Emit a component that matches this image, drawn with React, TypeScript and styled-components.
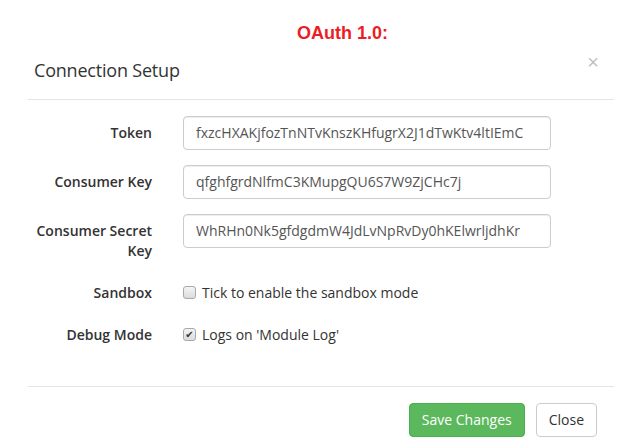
import React from 'react';
import styled, { createGlobalStyle } from 'styled-components';

const GlobalStyle = createGlobalStyle`
  html, body {
    margin: 0;
    padding: 0;
    background: #fff;
  }
  body {
    font-family: 'Open Sans', 'Liberation Sans', sans-serif;
    font-size: 14px;
    color: #333;
  }
  * {
    box-sizing: border-box;
  }
`;

const Page = styled.div`
  width: 623px;
  height: 444px;
  overflow: hidden;
`;

const Caption = styled.h2`
  margin: 0;
  padding: 23px 0 0 297px;
  font-family: 'Liberation Sans', Arial, sans-serif;
  font-size: 18px;
  line-height: 21px;
  font-weight: 700;
  color: #ed1c24;
`;

const Modal = styled.div`
  margin-left: 28px;
  width: 586px;
`;

const Header = styled.div`
  display: flex;
  justify-content: space-between;
  align-items: flex-start;
  padding: 14px 15px 15px 6px;
  border-bottom: 1px solid #e5e5e5;
`;

const Title = styled.h4`
  margin: 0;
  font-size: 18px;
  font-weight: 400;
  line-height: 1.42857;
  letter-spacing: -0.2px;
  color: #333;
`;

const CloseX = styled.button`
  margin-top: -6px;
  padding: 0;
  border: 0;
  background: transparent;
  font-family: 'Liberation Sans', Arial, sans-serif;
  font-size: 20px;
  font-weight: 400;
  line-height: 1;
  color: #000;
  opacity: 0.25;
  cursor: pointer;
`;

const Body = styled.div`
  padding: 16px 0 41px;
  display: grid;
  grid-template-columns: 124px 368px;
  column-gap: 31px;
  row-gap: 15px;
`;

const Label = styled.label`
  padding-top: 7px;
  text-align: right;
  font-weight: 600;
  line-height: 20px;
  color: #333;
`;

const Input = styled.input`
  display: block;
  width: 100%;
  height: 34px;
  padding: 6px 12px;
  font-family: inherit;
  font-size: 14px;
  line-height: 20px;
  color: #555;
  background: #fff;
  border: 1px solid #ccc;
  border-radius: 4px;
  box-shadow: inset 0 1px 1px rgba(0, 0, 0, 0.075);
  outline: none;
`;

const CheckLine = styled.label`
  display: flex;
  align-items: center;
  gap: 6px;
  padding-top: 7px;
  line-height: 20px;
  color: #333;
  cursor: pointer;
`;

const Box = styled.span<{ $checked?: boolean }>`
  display: inline-flex;
  align-items: center;
  justify-content: center;
  width: 13px;
  height: 13px;
  border: 1px solid #a9a9a9;
  border-radius: 3px;
  background: linear-gradient(#f4f4f4, #dcdcdc);
  font-family: 'DejaVu Sans', sans-serif;
  font-size: 10px;
  line-height: 1;
  color: #333;
`;

const Footer = styled.div`
  display: flex;
  justify-content: flex-end;
  gap: 11px;
  padding: 16px 17px 0 0;
  border-top: 1px solid #e5e5e5;
`;

const Button = styled.button<{ $primary?: boolean }>`
  height: 34px;
  padding: 6px 12px;
  font-family: inherit;
  font-size: 14px;
  line-height: 20px;
  border-radius: 4px;
  border: 1px solid ${p => (p.$primary ? '#4cae4c' : '#ccc')};
  background: ${p => (p.$primary ? '#5cb85c' : '#fff')};
  color: ${p => (p.$primary ? '#fff' : '#333')};
  cursor: pointer;
`;

const fields = [
  { label: 'Token', value: 'fxzcHXAKjfozTnNTvKnszKHfugrX2J1dTwKtv4ltIEmC' },
  { label: 'Consumer Key', value: 'qfghfgrdNlfmC3KMupgQU6S7W9ZjCHc7j' },
  { label: 'Consumer Secret Key', value: 'WhRHn0Nk5gfdgdmW4JdLvNpRvDy0hKElwrljdhKr' },
];

const App: React.FC = () => {
  return (
    <Page>
      <GlobalStyle />
      <Caption>OAuth 1.0:</Caption>
      <Modal>
        <Header>
          <Title>Connection Setup</Title>
          <CloseX aria-label="Close">×</CloseX>
        </Header>
        <Body>
          {fields.map(f => (
            <React.Fragment key={f.label}>
              <Label>{f.label}</Label>
              <Input defaultValue={f.value} />
            </React.Fragment>
          ))}
          <Label>Sandbox</Label>
          <CheckLine>
            <Box />
            Tick to enable the sandbox mode
          </CheckLine>
          <Label>Debug Mode</Label>
          <CheckLine>
            <Box $checked>✔</Box>
            Logs on 'Module Log'
          </CheckLine>
        </Body>
        <Footer>
          <Button $primary>Save Changes</Button>
          <Button>Close</Button>
        </Footer>
      </Modal>
    </Page>
  );
};

export default App;
